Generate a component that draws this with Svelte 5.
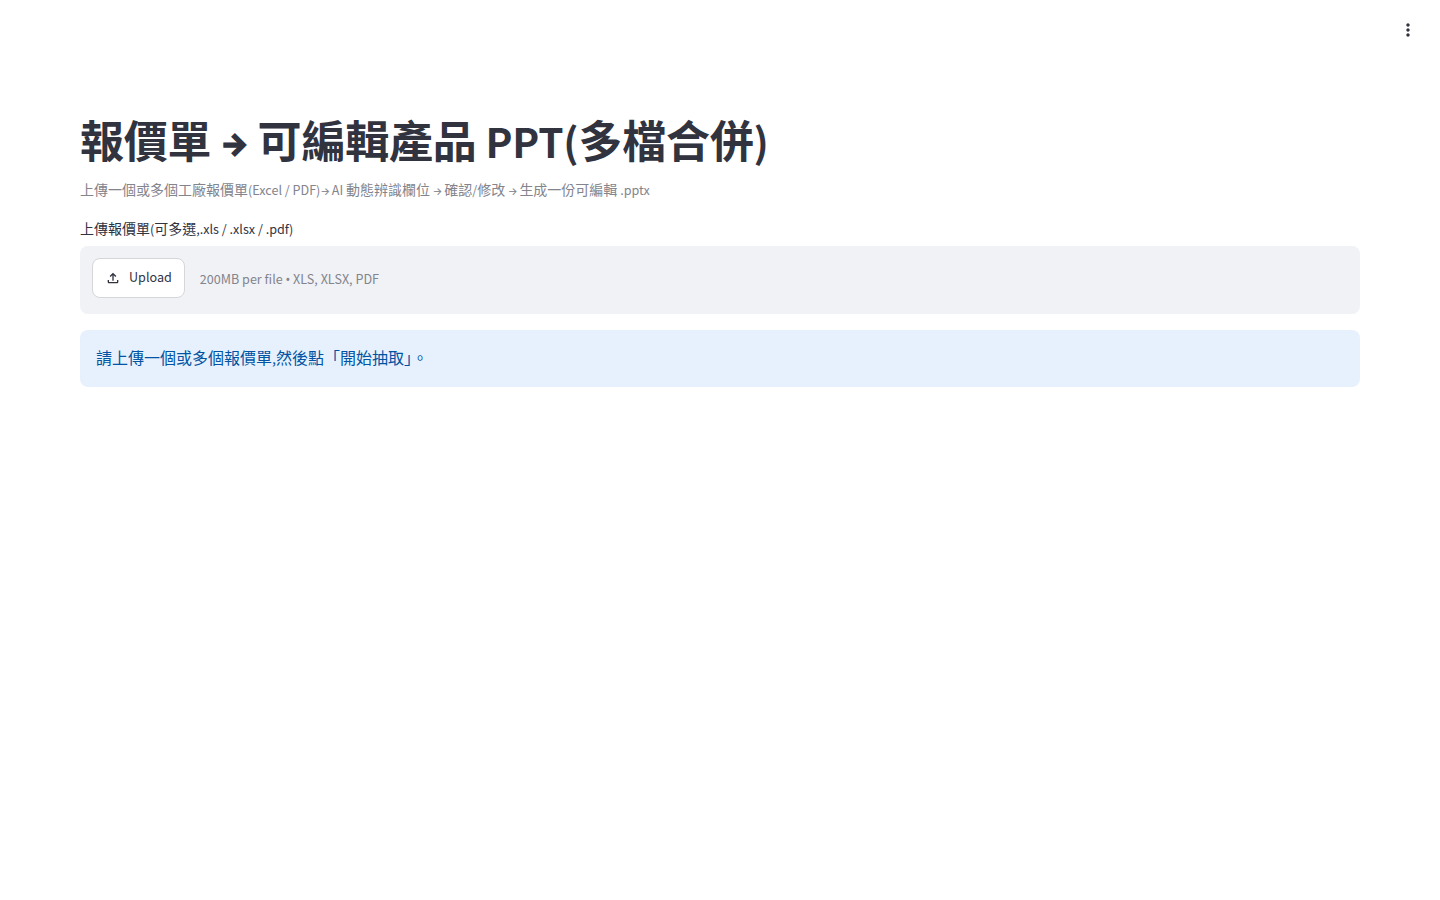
<script lang="ts">
  type Run = { text: string; kind: string };

  const title = '報價單 → 可編輯產品 PPT(多檔合併)';
  const caption = '上傳一個或多個工廠報價單(Excel / PDF)→ AI 動態辨識欄位 → 確認/修改 → 生成一份可編輯 .pptx';
  const uploadLabel = '上傳報價單(可多選,.xls / .xlsx / .pdf)';
  const note = '200MB per file • XLS, XLSX, PDF';
  const hint = '請上傳一個或多個報價單,然後點「開始抽取」。';

  // CJK text stays at full size; the Latin glyphs of the CJK family run large,
  // so ascii, arrows and bullets each get their own span.
  function runs(text: string): Run[] {
    const parts = text.match(/→|•|[\x00-\x7f]+|[^\x00-\x7f→•]+/g) ?? [];
    return parts.map((part) => {
      if (part === '→') return { text: part, kind: 'arrow' };
      if (part === '•') return { text: part, kind: 'dot' };
      return { text: part, kind: part.charCodeAt(0) < 128 ? 'lat' : 'cjk' };
    });
  }
</script>

{#snippet mixed(text)}
  {#each runs(text) as run}<span class={run.kind}>{run.text}</span>{/each}
{/snippet}

<div class="app">
  <header class="toolbar">
    <button type="button" class="menu" aria-label="Main menu">
      <svg viewBox="0 0 24 24" width="20" height="20" fill="currentColor" aria-hidden="true">
        <path d="M12 8c1.100 0 2-.9 2-2s-.9-2-2-2-2 .9-2 2 .9 2 2 2zm0 2c-1.100 0-2 .9-2 2s.9 2 2 2 2-.9 2-2-.9-2-2-2zm0 6c-1.100 0-2 .9-2 2s.9 2 2 2 2-.9 2-2-.9-2-2-2z" />
      </svg>
    </button>
  </header>

  <main class="main">
    <h1>{@render mixed(title)}</h1>
    <p class="caption">{@render mixed(caption)}</p>

    <section class="uploader">
      <div class="uploader__label">{@render mixed(uploadLabel)}</div>
      <div class="dropzone">
        <button type="button" class="upload">
          <svg viewBox="0 0 24 24" width="16" height="16" fill="currentColor" aria-hidden="true">
            <path d="M18 15v3H6v-3H4v3c0 1.100.9 2 2 2h12c1.100 0 2-.9 2-2v-3h-2zM7 9l1.410 1.410L11 7.830V16h2V7.830l2.590 2.580L17 9l-5-5-5 5z" />
          </svg>
          <span class="upload__text">{@render mixed('Upload')}</span>
        </button>
        <span class="dropzone__note">{@render mixed(note)}</span>
      </div>
    </section>

    <div class="alert">{@render mixed(hint)}</div>
  </main>
</div>

<style>
  :global(body) {
    background: #fff;
  }

  .app {
    min-height: 900px;
    font-family: "Noto Sans CJK TC", "Noto Sans", sans-serif;
    color: #31333f;
  }

  .lat {
    font-size: 0.9em;
  }

  .arrow {
    font-family: Inter, sans-serif;
    font-size: 0.7em;
    letter-spacing: -0.08em;
    -webkit-text-stroke: 0.2px currentColor;
  }

  .dot {
    font-family: "Noto Sans", sans-serif;
    font-size: 0.9em;
  }

  .toolbar {
    display: flex;
    justify-content: flex-end;
    align-items: center;
    height: 60px;
    padding-right: 16px;
    box-sizing: border-box;
  }

  .menu {
    display: flex;
    align-items: center;
    justify-content: center;
    width: 32px;
    height: 32px;
    padding: 0;
    border: 0;
    background: transparent;
    color: #31333f;
  }

  .main {
    display: flex;
    flex-direction: column;
    padding: 49px 80px 0;
  }

  h1 {
    margin: 0;
    font-size: 44px;
    font-weight: 700;
    line-height: 60px;
    letter-spacing: -0.22px;
  }

  h1 .lat {
    font-size: 0.92em;
  }

  h1 .arrow {
    font-size: 0.68em;
    font-weight: 800;
    letter-spacing: -0.22px;
    vertical-align: 3px;
    -webkit-text-stroke: 1.4px currentColor;
  }

  .caption {
    margin: 5px 0 0;
    font-size: 14px;
    line-height: 20px;
    color: #83848c;
  }

  .uploader {
    margin-top: 16px;
  }

  .uploader__label {
    font-size: 14px;
    line-height: 20px;
    color: #31333f;
  }

  .dropzone {
    display: flex;
    align-items: center;
    gap: 15px;
    height: 68px;
    margin-top: 7px;
    padding: 0 12px;
    box-sizing: border-box;
    border-radius: 8px;
    background: #f0f2f6;
  }

  .upload {
    display: flex;
    align-items: center;
    gap: 8px;
    height: 40px;
    margin-top: -4px;
    padding: 0 12px;
    box-sizing: border-box;
    border: 1px solid #d5d6da;
    border-radius: 8px;
    background: #fff;
    color: #31333f;
    font: inherit;
    font-size: 14px;
  }

  .upload__text {
    padding-bottom: 4px;
  }

  .dropzone__note {
    padding-bottom: 4px;
    font-size: 14px;
    color: #83848c;
  }

  .alert {
    margin-top: 16px;
    padding: 15px 16px 17px;
    border-radius: 8px;
    background: #e7f1fd;
    color: #0054a3;
    font-size: 16px;
    line-height: 24px;
  }
</style>
